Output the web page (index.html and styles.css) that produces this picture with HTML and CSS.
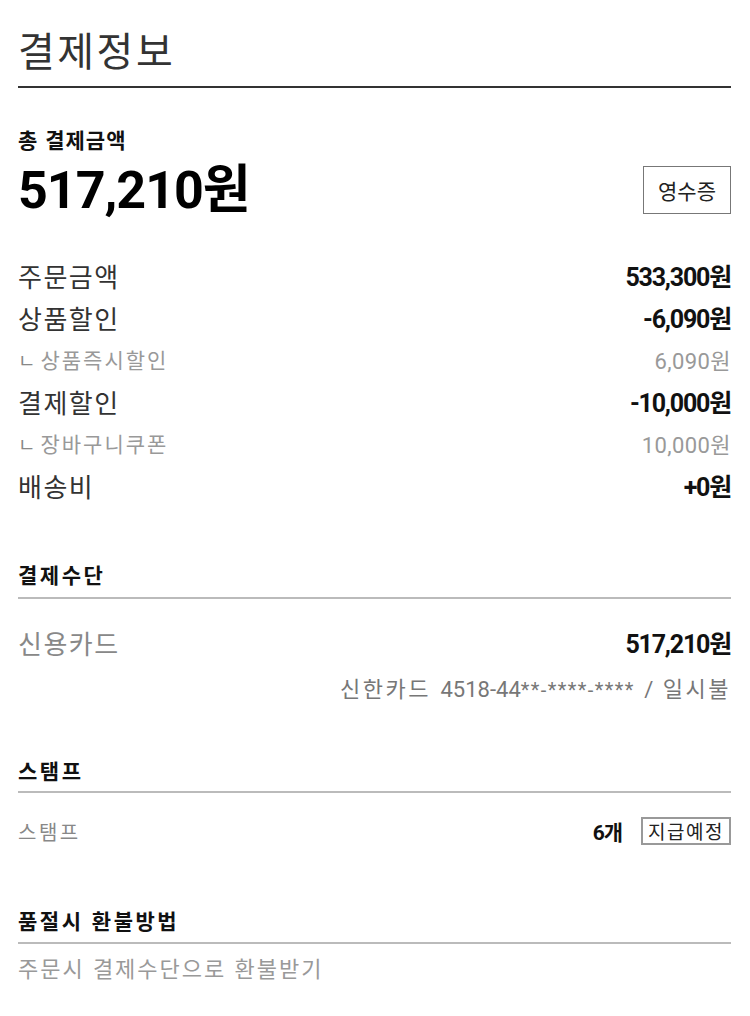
FILE: index.html
```html
<!DOCTYPE html>
<html lang="ko">
<head>
<meta charset="utf-8">
<link rel="stylesheet" href="styles.css">
</head>
<body>
<div class="page">
  <h1 class="title">결제정보</h1>

  <section class="total">
    <div class="total-label">총 결제금액</div>
    <div class="total-row">
      <div class="total-amount">517,210원</div>
      <button class="btn-receipt">영수증</button>
    </div>
  </section>

  <ul class="breakdown">
    <li class="row"><span class="label">주문금액</span><span class="value">533,300원</span></li>
    <li class="row"><span class="label">상품할인</span><span class="value">-6,090원</span></li>
    <li class="row sub"><span class="label"><span class="corner">ㄴ</span>상품즉시할인</span><span class="value">6,090원</span></li>
    <li class="row"><span class="label">결제할인</span><span class="value">-10,000원</span></li>
    <li class="row sub"><span class="label"><span class="corner">ㄴ</span>장바구니쿠폰</span><span class="value">10,000원</span></li>
    <li class="row"><span class="label">배송비</span><span class="value">+0원</span></li>
  </ul>

  <section class="block block-pay">
    <h2 class="block-title">결제수단</h2>
    <div class="pay-row"><span class="pay-label">신용카드</span><span class="value">517,210원</span></div>
    <div class="pay-detail"><span class="kr">신한카드</span> 4518-44<span class="mask">**-****-****</span> / <span class="kr">일시불</span></div>
  </section>

  <section class="block block-stamp">
    <h2 class="block-title">스탬프</h2>
    <div class="stamp-row">
      <span class="stamp-label">스탬프</span>
      <span class="stamp-right"><span class="stamp-count">6개</span><span class="stamp-tag">지급예정</span></span>
    </div>
  </section>

  <section class="block block-refund">
    <h2 class="block-title">품절시 환불방법</h2>
    <p class="refund-text">주문시 결제수단으로 환불받기</p>
  </section>
</div>
</body>
</html>
```

FILE: styles.css
```css
* { box-sizing: border-box; }
html, body { margin: 0; padding: 0; background: #fff; }
body {
  font-family: Roboto, "Noto Sans CJK KR", sans-serif;
  color: #111;
}
.page {
  padding: 0 19px 0 18px;
}
.title {
  margin: 0;
  padding: 24px 0 12px;
  font-family: "Noto Sans CJK KR", sans-serif;
  font-size: 40px;
  line-height: 50px;
  font-weight: 400;
  letter-spacing: 2.5px;
  color: #333;
  border-bottom: 2px solid #333;
}
.total { margin-top: 37px; }
.total-label {
  font-family: "Noto Sans CJK KR", sans-serif;
  font-size: 21px;
  line-height: 28px;
  font-weight: 700;
  letter-spacing: 1px;
  color: #111;
}
.total-row {
  margin-top: 8px;
  height: 60px;
  display: flex;
  align-items: center;
  justify-content: space-between;
}
.total-amount {
  font-size: 52px;
  line-height: 60px;
  font-weight: 700;
  letter-spacing: -1px;
  color: #000;
}
.btn-receipt {
  width: 88px;
  height: 48px;
  border: 1px solid #777;
  background: #fff;
  font-family: "Noto Sans CJK KR", sans-serif;
  font-size: 21px;
  color: #222;
  padding: 0;
  margin-top: -2px;
}
.breakdown {
  list-style: none;
  margin: 33px 0 0;
  padding: 0;
}
.row {
  display: flex;
  justify-content: space-between;
  align-items: center;
  height: 42px;
}
.row .label {
  font-family: "Noto Sans CJK KR", sans-serif;
  font-size: 26px;
  letter-spacing: 1.5px;
  color: #333;
}
.value {
  font-size: 25px;
  font-weight: 700;
  letter-spacing: -1.2px;
  color: #111;
}
.row.sub .label {
  font-size: 21px;
  letter-spacing: 2px;
  color: #999;
}
.corner {
  font-size: 19px;
  margin-right: 5px;
  letter-spacing: 0;
  color: #888;
}
.row.sub .value {
  font-size: 22px;
  font-weight: 400;
  letter-spacing: 0.4px;
  color: #999;
}
.block-title {
  margin: 0;
  font-family: "Noto Sans CJK KR", sans-serif;
  font-size: 21px;
  line-height: 28px;
  font-weight: 700;
  letter-spacing: 2.5px;
  color: #111;
  border-bottom: 2px solid #bbb;
}
.block-pay { margin-top: 54px; }
.block-pay .block-title { padding-bottom: 9px; }
.pay-row {
  margin-top: 22px;
  height: 42px;
  display: flex;
  justify-content: space-between;
  align-items: center;
}
.pay-label {
  font-family: "Noto Sans CJK KR", sans-serif;
  font-size: 26px;
  letter-spacing: 1.5px;
  color: #888;
}
.pay-detail {
  margin-top: 6px;
  text-align: right;
  font-size: 22px;
  line-height: 36px;
  color: #777;
  word-spacing: 4px;
}
.pay-detail .kr {
  font-family: "Noto Sans CJK KR", sans-serif;
  letter-spacing: 2.5px;
}
.mask {
  font-size: 20px;
  letter-spacing: 1.4px;
}
.block-stamp { margin-top: 48px; }
.block-stamp .block-title { padding-bottom: 7px; }
.stamp-row {
  margin-top: 23px;
  height: 30px;
  display: flex;
  justify-content: space-between;
  align-items: center;
}
.stamp-label {
  font-family: "Noto Sans CJK KR", sans-serif;
  font-size: 20px;
  letter-spacing: 2.5px;
  color: #888;
}
.stamp-right {
  display: flex;
  align-items: center;
  gap: 19px;
}
.stamp-count {
  font-size: 21px;
  font-weight: 700;
  letter-spacing: -1px;
  color: #111;
}
.stamp-tag {
  width: 90px;
  height: 28px;
  border: 2px solid #999;
  font-family: "Noto Sans CJK KR", sans-serif;
  font-size: 19px;
  line-height: 24px;
  letter-spacing: 1.5px;
  text-align: center;
  color: #222;
}
.block-refund { margin-top: 60px; }
.block-refund .block-title { padding-bottom: 8px; }
.refund-text {
  margin: 8px 0 0;
  font-family: "Noto Sans CJK KR", sans-serif;
  font-size: 22px;
  line-height: 30px;
  letter-spacing: 2px;
  color: #999;
}
```
